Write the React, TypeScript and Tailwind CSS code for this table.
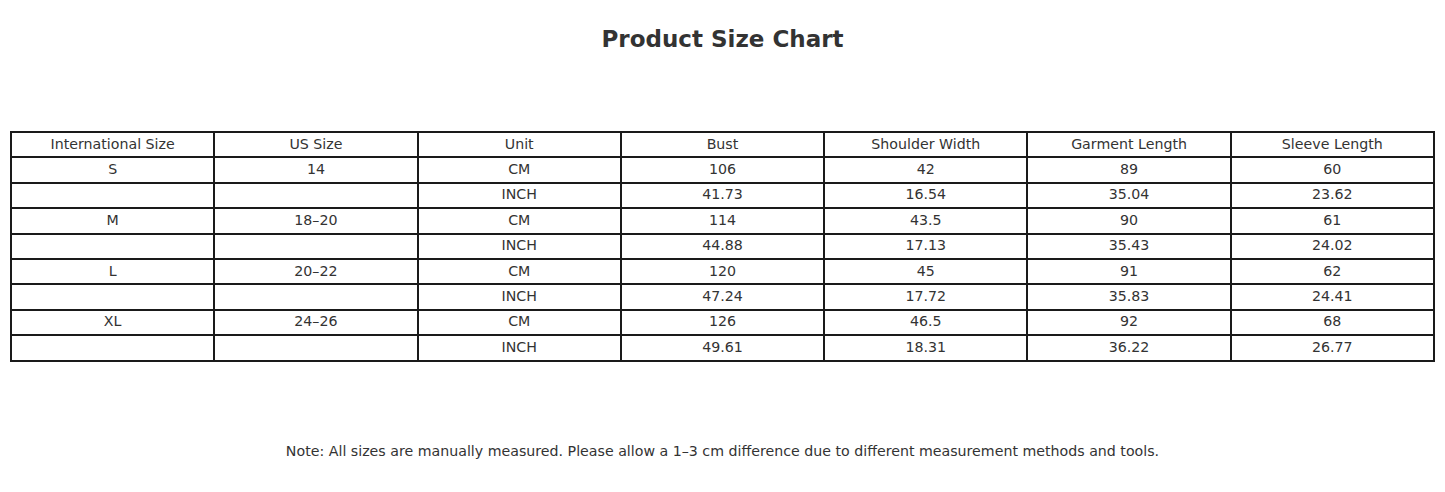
import React from 'react';

const headers = ['International Size', 'US Size', 'Unit', 'Bust', 'Shoulder Width', 'Garment Length', 'Sleeve Length'];

const rows: string[][] = [
    ['S', '14', 'CM', '106', '42', '89', '60'],
    ['', '', 'INCH', '41.73', '16.54', '35.04', '23.62'],
    ['M', '18–20', 'CM', '114', '43.5', '90', '61'],
    ['', '', 'INCH', '44.88', '17.13', '35.43', '24.02'],
    ['L', '20–22', 'CM', '120', '45', '91', '62'],
    ['', '', 'INCH', '47.24', '17.72', '35.83', '24.41'],
    ['XL', '24–26', 'CM', '126', '46.5', '92', '68'],
    ['', '', 'INCH', '49.61', '18.31', '36.22', '26.77'],
];

const cell = 'border-2 border-[#1a1a1a] h-[25.4px] p-0 pb-[2px] text-center font-normal leading-none';

const App: React.FC = () => {
    return (
        <div className="w-full bg-white text-[#333] font-['DejaVu_Sans',sans-serif] px-[10px] pt-[21px]">
            <h1 className="text-center text-[23px] font-bold leading-[36px]">Product Size Chart</h1>

            {/* size table */}
            <table className="w-full table-fixed border-collapse mt-[74px] text-[14.2px]">
                <thead>
                    <tr>
                        {headers.map((h) => (
                            <th key={h} className={cell}>{h}</th>
                        ))}
                    </tr>
                </thead>
                <tbody>
                    {rows.map((r, i) => (
                        <tr key={i}>
                            {r.map((v, j) => (
                                <td key={j} className={cell}>{v}</td>
                            ))}
                        </tr>
                    ))}
                </tbody>
            </table>

            <p className="text-center text-[14.2px] leading-[22px] mt-[78px]">
                Note: All sizes are manually measured. Please allow a 1–3 cm difference due to different measurement methods and tools.
            </p>
        </div>
    );
};

export default App;
